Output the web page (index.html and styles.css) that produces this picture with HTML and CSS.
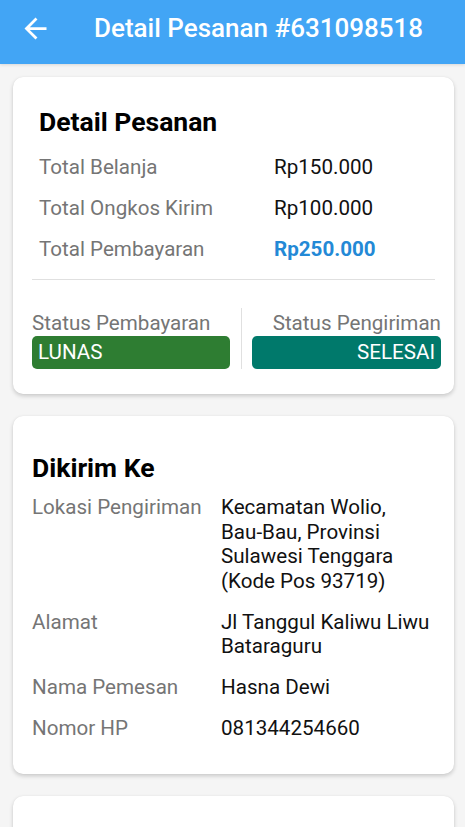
FILE: index.html
```html
<!DOCTYPE html>
<html lang="id">
<head>
<meta charset="utf-8">
<title>Detail Pesanan #631098518</title>
<link rel="stylesheet" href="styles.css">
</head>
<body>
<header class="appbar">
  <button class="back" aria-label="Kembali">
    <svg viewBox="0 0 24 24" width="33" height="33"><path fill="#fff" d="M20 11H7.83l5.59-5.59L12 4l-8 8 8 8 1.41-1.41L7.83 13H20v-2z"/></svg>
  </button>
  <h1 class="appbar-title">Detail Pesanan #631098518</h1>
</header>
<main class="content">
  <section class="card card-summary">
    <div class="summary-top">
      <h2 class="card-title">Detail Pesanan</h2>
      <div class="kv">
        <span class="k">Total Belanja</span><span class="v">Rp150.000</span>
        <span class="k">Total Ongkos Kirim</span><span class="v">Rp100.000</span>
        <span class="k">Total Pembayaran</span><span class="v v-total">Rp250.000</span>
      </div>
    </div>
    <hr class="divider">
    <div class="status">
      <div class="status-col">
        <div class="status-label">Status Pembayaran</div>
        <div class="badge badge-green">LUNAS</div>
      </div>
      <div class="vline"></div>
      <div class="status-col status-col-right">
        <div class="status-label">Status Pengiriman</div>
        <div class="badge badge-teal">SELESAI</div>
      </div>
    </div>
  </section>
  <section class="card card-ship">
    <h2 class="card-title">Dikirim Ke</h2>
    <div class="ship">
      <span class="k">Lokasi Pengiriman</span><span class="v">Kecamatan Wolio,<br>Bau-Bau, Provinsi Sulawesi Tenggara (Kode Pos 93719)</span>
      <span class="k">Alamat</span><span class="v">Jl Tanggul Kaliwu Liwu Bataraguru</span>
      <span class="k">Nama Pemesan</span><span class="v">Hasna Dewi</span>
      <span class="k">Nomor HP</span><span class="v">081344254660</span>
    </div>
  </section>
  <section class="card card-next"></section>
</main>
</body>
</html>
```
FILE: styles.css
```css
* { box-sizing: border-box; }
html, body { margin: 0; padding: 0; }
body {
  background: #f5f5f5;
  font-family: Roboto, "Noto Sans", sans-serif;
  width: 465px;
  height: 827px;
  overflow: hidden;
}
.appbar {
  height: 64px;
  background: #42a5f5;
  display: flex;
  align-items: center;
  padding-left: 19px;
  box-shadow: 0 1px 3px rgba(0,0,0,0.12);
}
.back {
  background: none;
  border: 0;
  padding: 0;
  width: 33px;
  height: 33px;
  display: flex;
  margin-top: -8px;
}
.appbar-title {
  margin: 0 0 0 42px;
  color: #fff;
  font-size: 26px;
  font-weight: 500;
  line-height: 30px;
  margin-top: -8px;
}
.content {
  padding: 13px 11px 0 13px;
  display: flex;
  flex-direction: column;
  gap: 22px;
}
.card {
  background: #fff;
  border-radius: 10px;
  box-shadow: 0 2px 4px rgba(0,0,0,0.18), 0 0 1px rgba(0,0,0,0.08);
}
.card-summary { padding: 31px 13px 25px 19px; }
.summary-top { padding-left: 7px; }
.card-title {
  margin: 0;
  font-size: 26.5px;
  font-weight: 700;
  line-height: 28px;
  color: #000;
}
.kv {
  display: grid;
  grid-template-columns: 235px 1fr;
  grid-auto-rows: 41px;
  align-items: center;
  margin-top: 10px;
  font-size: 20.6px;
}
.k { color: #757575; }
.v { color: #111; }
.v-total { color: #2389d6; font-weight: 700; }
.divider {
  border: 0;
  border-top: 1px solid #e0e0e0;
  margin: 10px 6px 0 0;
}
.status {
  display: flex;
  margin-top: 31px;
  font-size: 20.6px;
}
.status-col { width: 198px; display: flex; flex-direction: column; }
.status-col-right { width: auto; flex: 1; align-items: stretch; }
.vline { width: 1px; background: #e0e0e0; margin: -3px 10px 0 11px; }
.status-label { color: #757575; line-height: 24px; }
.status-col-right .status-label { text-align: right; }
.badge {
  margin-top: 1px;
  height: 33px;
  line-height: 33px;
  border-radius: 5px;
  color: #fff;
  padding: 0 6px;
}
.badge-green { background: #2e7d32; }
.badge-teal { background: #00796b; text-align: right; }
.card-ship { padding: 38px 19px 33px 19px; }
.ship {
  display: grid;
  grid-template-columns: 189px 1fr;
  row-gap: 16.5px;
  margin-top: 13px;
  font-size: 20.6px;
  line-height: 24.5px;
}
.card-next { height: 60px; }
```
